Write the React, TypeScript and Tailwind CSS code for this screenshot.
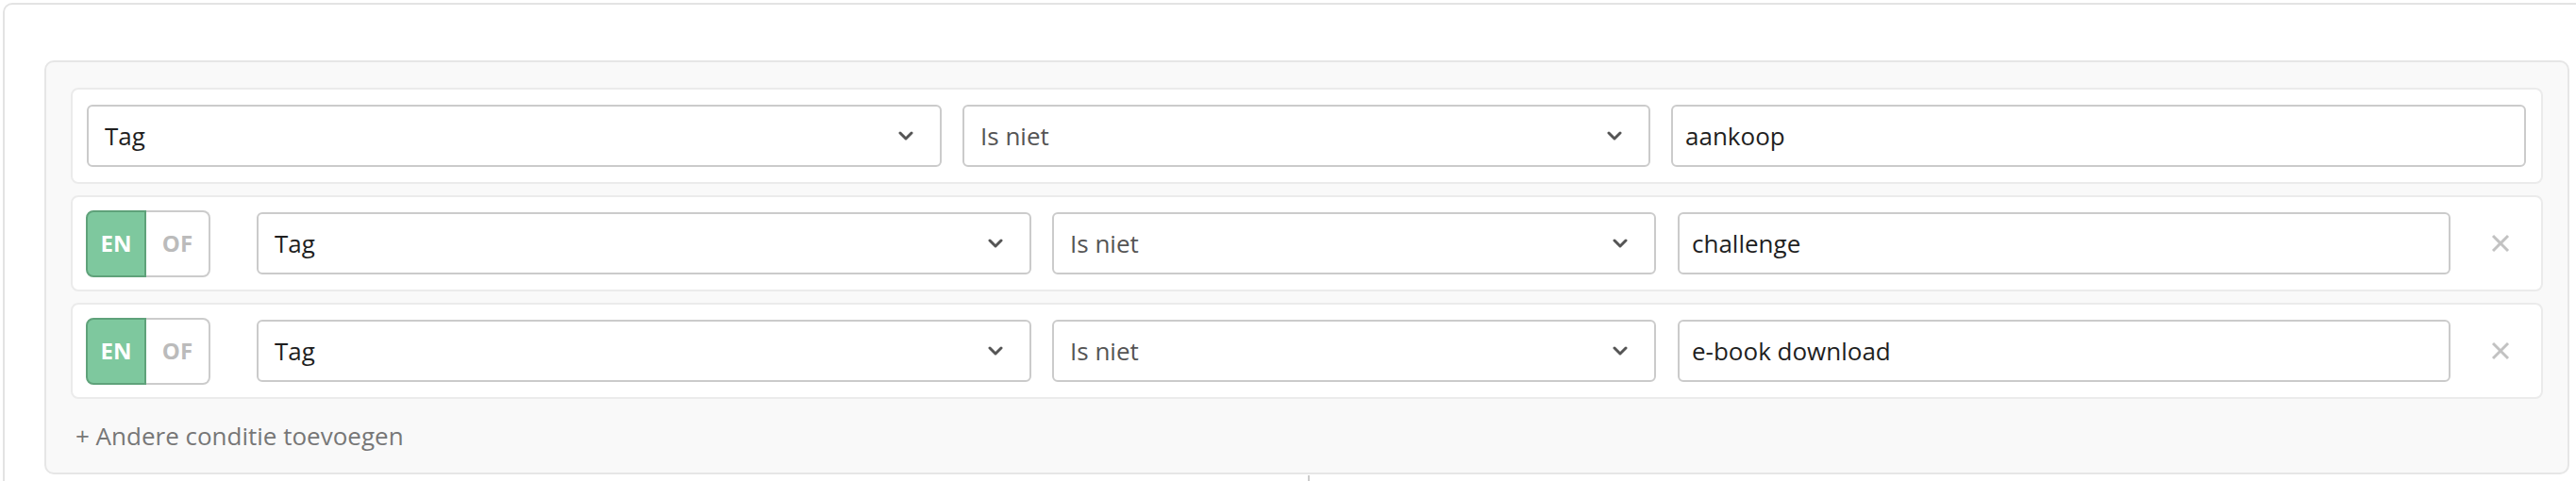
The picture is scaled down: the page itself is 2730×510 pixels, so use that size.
import React from "react";

function Chevron() {
  return (
    <svg width="16" height="10" viewBox="0 0 16 10" className="shrink-0">
      <polyline points="2,2 8,8 14,2" fill="none" stroke="#555555" strokeWidth="3" strokeLinecap="round" strokeLinejoin="round" />
    </svg>
  );
}

function CloseX() {
  return (
    <svg width="20" height="20" viewBox="0 0 20 20" className="shrink-0">
      <line x1="2" y1="2" x2="18" y2="18" stroke="#c2c2c2" strokeWidth="3" />
      <line x1="18" y1="2" x2="2" y2="18" stroke="#c2c2c2" strokeWidth="3" />
    </svg>
  );
}

function Select({ value, muted, className }: { value: string; muted?: boolean; className: string }) {
  return (
    <div
      className={`${className} flex h-[66px] shrink-0 items-center justify-between rounded-[6px] border-2 border-[#cbcbcb] bg-white pl-[17px] pr-[28px] text-[26px] ${
        muted ? "text-[#555555]" : "text-[#1f1f1f]"
      }`}
    >
      <span>{value}</span>
      <Chevron />
    </div>
  );
}

function Input({ value, className }: { value: string; className: string }) {
  return (
    <div
      className={`${className} flex h-[66px] shrink-0 items-center rounded-[6px] border-2 border-[#cbcbcb] bg-white pl-[13px] text-[26px] text-[#1f1f1f]`}
    >
      <span>{value}</span>
    </div>
  );
}

function Toggle() {
  return (
    <div className="flex h-[71px] w-[132px] shrink-0">
      <div className="flex w-[64px] items-center justify-center rounded-l-[8px] border-2 border-[#5fa27a] bg-[#7ec89e] text-[24px] font-bold text-white">
        EN
      </div>
      <div className="flex flex-1 items-center justify-center rounded-r-[8px] border-2 border-l-0 border-[#cccccc] bg-white text-[24px] font-bold text-[#bbbbbb]">
        OF
      </div>
    </div>
  );
}

function ConditionRow({ value }: { value: string }) {
  return (
    <div className="flex h-[102px] items-center rounded-[8px] border-2 border-[#ebebeb] bg-white pl-[14px] pr-[33px]">
      <Toggle />
      <Select value="Tag" className="ml-[49px] w-[821px]" />
      <Select value="Is niet" muted className="ml-[22px] w-[640px]" />
      <Input value={value} className="ml-[23px] w-[819px]" />
      <div className="ml-[43px]">
        <CloseX />
      </div>
    </div>
  );
}

export default function App() {
  return (
    <div className="h-[510px] w-full overflow-hidden bg-white font-['Open_Sans',sans-serif]">
      <div className="ml-[3px] mt-[3px] h-[540px] rounded-tl-[10px] border-l-2 border-t-2 border-[#e3e3e3]">
        <div className="ml-[42px] mr-[7px] mt-[59px] rounded-[10px] border-2 border-[#e6e6e6] bg-[#f9f9f9] px-[26px] pb-[19px] pt-[27px]">
          <div className="flex flex-col gap-[12px]">
            <div className="flex h-[102px] items-center gap-[22px] rounded-[8px] border-2 border-[#ebebeb] bg-white px-[15px]">
              <Select value="Tag" className="w-[906px]" />
              <Select value="Is niet" muted className="w-[729px]" />
              <Input value="aankoop" className="w-[906px]" />
            </div>
            <ConditionRow value="challenge" />
            <ConditionRow value="e-book download" />
          </div>
          <div className="ml-[5px] mt-[19px] h-[40px] text-[26px] leading-[40px] text-[#777777]">
            + Andere conditie toevoegen
          </div>
        </div>
        <div className="ml-[1381px] mt-[1px] h-[12px] w-[2px] bg-[#cccccc]" />
      </div>
    </div>
  );
}
